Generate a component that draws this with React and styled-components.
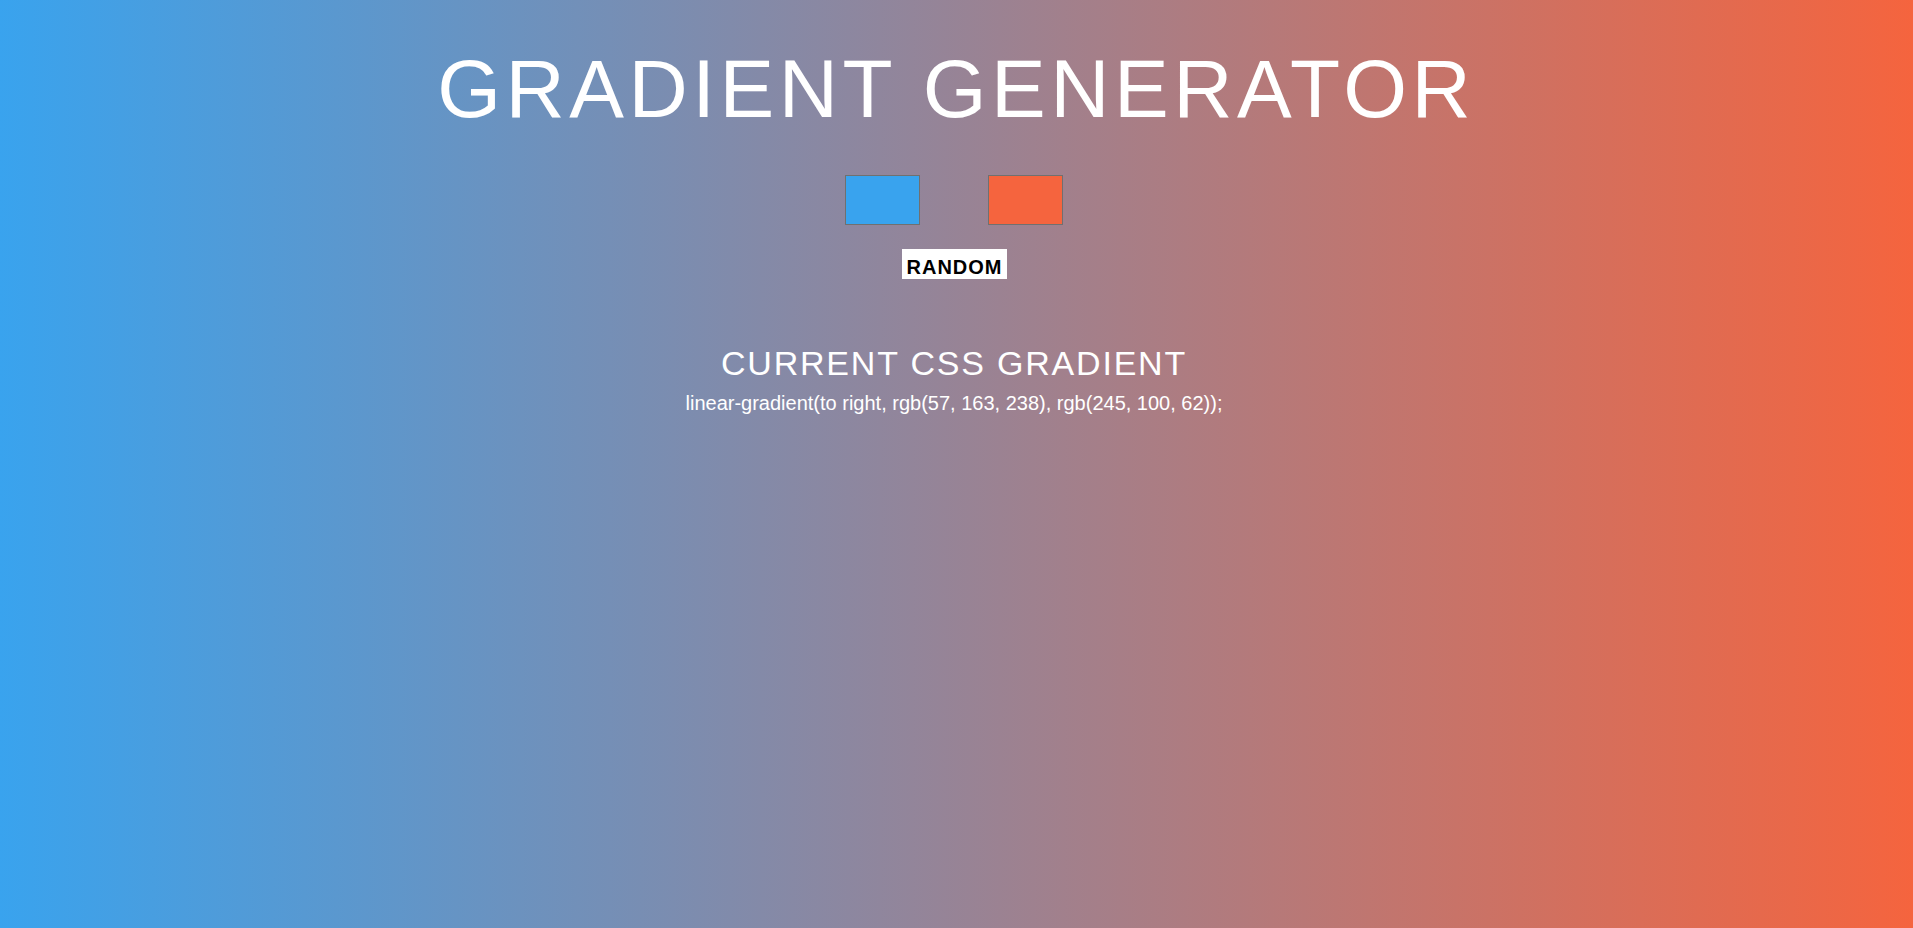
import React from "react";
import styled, { createGlobalStyle } from "styled-components";

const GlobalStyle = createGlobalStyle`
  html, body {
    margin: 0;
    padding: 0;
  }
  body {
    font-family: "Liberation Sans", Arial, sans-serif;
  }
`;

const Page = styled.div`
  min-height: 100vh;
  box-sizing: border-box;
  padding: 42px 5px 0 0;
  background: linear-gradient(to right, rgb(57, 163, 238), rgb(245, 100, 62));
  color: #fff;
  text-align: center;
  display: flex;
  flex-direction: column;
  align-items: center;
`;

const Title = styled.h1`
  margin: 0;
  font-size: 82px;
  line-height: 94px;
  font-weight: 400;
  letter-spacing: 4.5px;
  padding-left: 4.5px;
`;

const Pickers = styled.div`
  display: flex;
  gap: 68px;
  margin-top: 39px;
`;

const ColorInput = styled.input`
  -webkit-appearance: none;
  appearance: none;
  width: 75px;
  height: 50px;
  padding: 0;
  margin: 0;
  border: 1px solid #707070;
  box-sizing: border-box;
  background: ${(p) => p.value};
  cursor: pointer;
  &::-webkit-color-swatch-wrapper {
    padding: 0;
  }
  &::-webkit-color-swatch {
    border: none;
  }
`;

const RandomButton = styled.button`
  margin-top: 24px;
  height: 30px;
  box-sizing: border-box;
  padding: 7px 4px 0 5px;
  border: none;
  background: #fff;
  color: #000;
  font-family: "Liberation Sans", Arial, sans-serif;
  font-size: 20px;
  line-height: 23px;
  font-weight: 700;
  letter-spacing: 1px;
  cursor: pointer;
`;

const Heading = styled.h2`
  margin: 65px 0 0;
  font-size: 34px;
  line-height: 39px;
  font-weight: 400;
  letter-spacing: 1.8px;
`;

const Code = styled.p`
  margin: 9px 0 0;
  font-size: 20px;
  line-height: 23px;
`;

export default function App() {
  const [c1, setC1] = React.useState("#39a3ee");
  const [c2, setC2] = React.useState("#f5643e");
  return (
    <>
      <GlobalStyle />
      <Page>
        <Title>GRADIENT GENERATOR</Title>
        <Pickers>
          <ColorInput type="color" value={c1} onChange={(e) => setC1(e.target.value)} />
          <ColorInput type="color" value={c2} onChange={(e) => setC2(e.target.value)} />
        </Pickers>
        <div>
          <RandomButton>RANDOM</RandomButton>
        </div>
        <Heading>CURRENT CSS GRADIENT</Heading>
        <Code>linear-gradient(to right, rgb(57, 163, 238), rgb(245, 100, 62));</Code>
      </Page>
    </>
  );
}
